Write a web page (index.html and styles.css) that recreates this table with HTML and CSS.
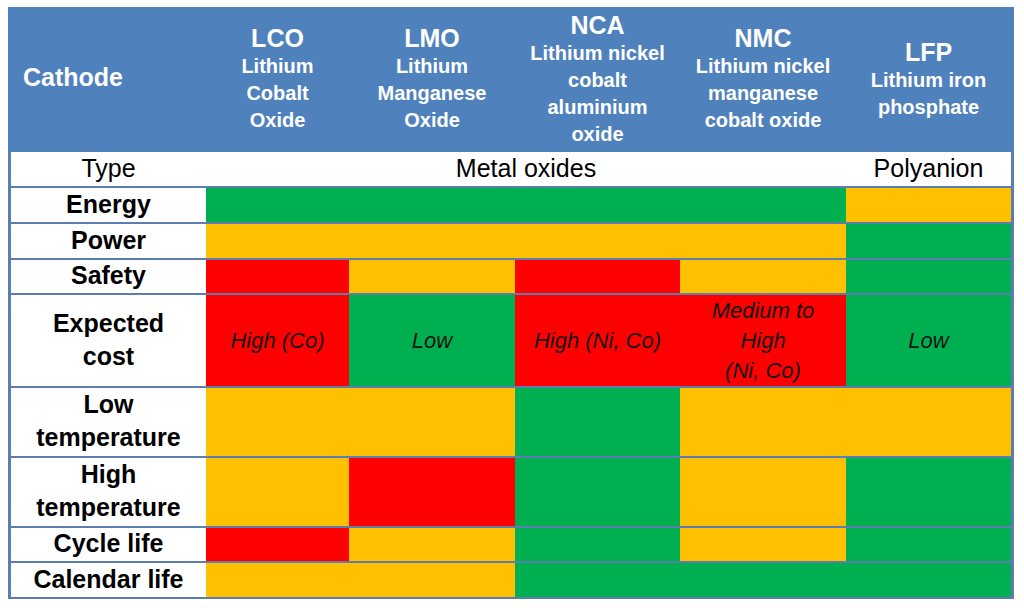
FILE: index.html
```html
<!DOCTYPE html>
<html>
<head>
<meta charset="utf-8">
<link rel="stylesheet" href="styles.css">
</head>
<body>
<div class="table">
  <div class="hd hd-first">Cathode</div>
  <div class="hd"><div class="ttl">LCO</div><div class="sub">Lithium<br>Cobalt<br>Oxide</div></div>
  <div class="hd"><div class="ttl">LMO</div><div class="sub">Lithium<br>Manganese<br>Oxide</div></div>
  <div class="hd"><div class="ttl">NCA</div><div class="sub">Lithium nickel<br>cobalt<br>aluminium<br>oxide</div></div>
  <div class="hd"><div class="ttl">NMC</div><div class="sub">Lithium nickel<br>manganese<br>cobalt oxide</div></div>
  <div class="hd"><div class="ttl">LFP</div><div class="sub">Lithium iron<br>phosphate</div></div>

  <div class="type">Type</div>
  <div class="type span4">Metal oxides</div>
  <div class="type">Polyanion</div>

  <div class="lbl">Energy</div>
  <div class="c g span4"></div>
  <div class="c o"></div>

  <div class="lbl">Power</div>
  <div class="c o span4"></div>
  <div class="c g"></div>

  <div class="lbl">Safety</div>
  <div class="c r"></div>
  <div class="c o"></div>
  <div class="c r"></div>
  <div class="c o"></div>
  <div class="c g"></div>

  <div class="lbl">Expected<br>cost</div>
  <div class="c r">High (Co)</div>
  <div class="c g">Low</div>
  <div class="c r">High (Ni, Co)</div>
  <div class="c r">Medium to<br>High<br>(Ni, Co)</div>
  <div class="c g">Low</div>

  <div class="lbl">Low<br>temperature</div>
  <div class="c o span2"></div>
  <div class="c g"></div>
  <div class="c o span2"></div>

  <div class="lbl">High<br>temperature</div>
  <div class="c o"></div>
  <div class="c r"></div>
  <div class="c g"></div>
  <div class="c o"></div>
  <div class="c g"></div>

  <div class="lbl">Cycle life</div>
  <div class="c r"></div>
  <div class="c o"></div>
  <div class="c g"></div>
  <div class="c o"></div>
  <div class="c g"></div>

  <div class="lbl">Calendar life</div>
  <div class="c o span2"></div>
  <div class="c g span3"></div>
</div>
</body>
</html>
```

FILE: styles.css
```css
html, body {
  margin: 0;
  padding: 0;
  background: #ffffff;
}
body {
  padding: 7px 0 0 8px;
  font-family: "Liberation Sans", Arial, sans-serif;
}
.table {
  display: grid;
  width: fit-content;
  grid-template-columns: 195px 143px 166px 165px 166px 165px;
  grid-template-rows: 143px 34px 34px 34px 33px 91px 68px 68px 33px 34px;
  row-gap: 2px;
  padding: 0 3px 2px 3px;
  background: #5b7db0;
  background-image: linear-gradient(#4f81bd, #4f81bd);
  background-size: 100% 145px;
  background-repeat: no-repeat;
}
.hd {
  background: #4f81bd;
  color: #ffffff;
  font-weight: bold;
  display: flex;
  flex-direction: column;
  justify-content: center;
  align-items: center;
  text-align: center;
  margin-bottom: -2px;
  padding-bottom: 2px;
}
.hd-first {
  align-items: flex-start;
  padding-left: 12px;
  padding-bottom: 4px;
  font-size: 25px;
}
.ttl {
  font-size: 25px;
  line-height: 30px;
}
.sub {
  font-size: 20px;
  line-height: 27px;
}
.type {
  background: #ffffff;
  color: #000000;
  font-size: 25px;
  display: flex;
  align-items: center;
  justify-content: center;
  padding-bottom: 2px;
}
.lbl {
  background: #ffffff;
  color: #000000;
  font-weight: bold;
  font-size: 25px;
  line-height: 33px;
  display: flex;
  align-items: center;
  justify-content: center;
  text-align: center;
  padding-bottom: 2px;
}
.c {
  font-style: italic;
  font-size: 22px;
  line-height: 30px;
  color: #141414;
  display: flex;
  align-items: center;
  justify-content: center;
  text-align: center;
}
.g { background: #00b050; }
.o { background: #ffc000; }
.r { background: #ff0000; }
.span2 { grid-column: span 2; }
.span3 { grid-column: span 3; }
.span4 { grid-column: span 4; }
```
